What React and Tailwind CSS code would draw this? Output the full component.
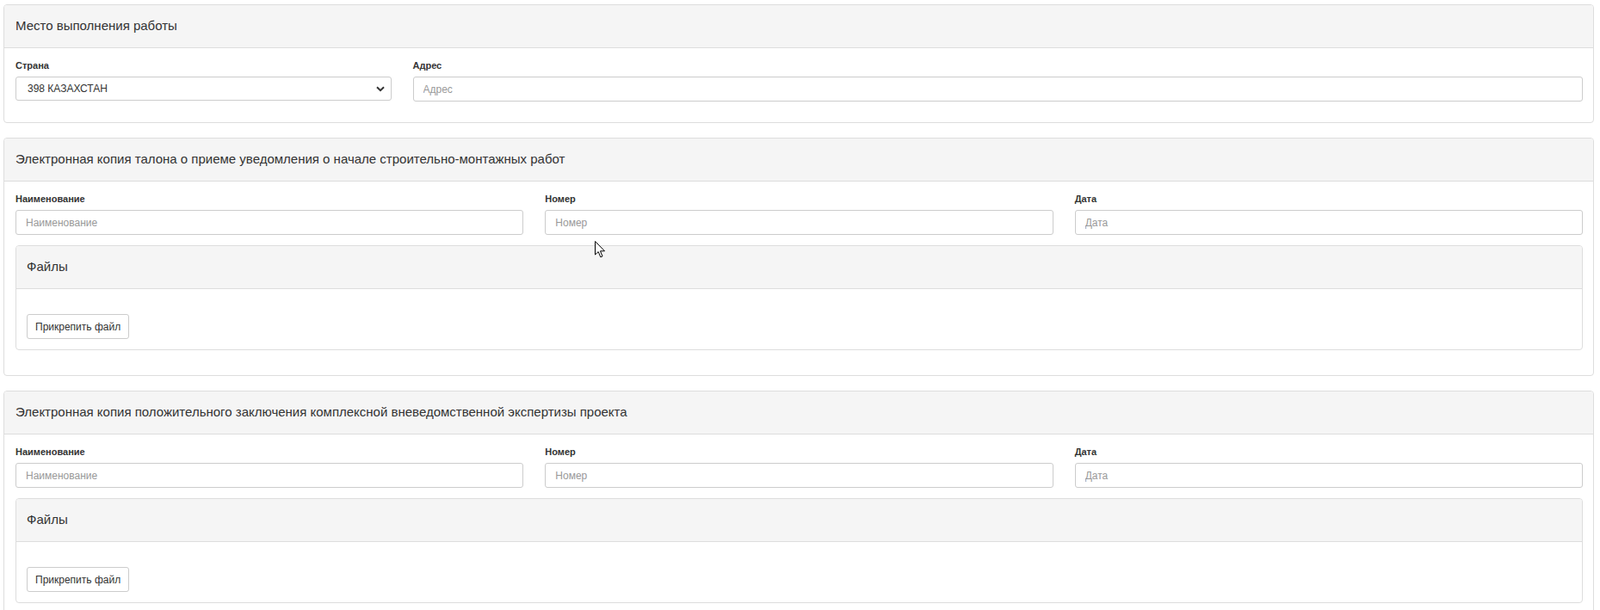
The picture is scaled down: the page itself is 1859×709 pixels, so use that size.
import React from "react";

const font = { fontFamily: '"Liberation Sans", Arial, sans-serif' };

function Chevron() {
  return (
    <svg width="10" height="7" viewBox="0 0 10 7" className="pointer-events-none absolute right-[8px] top-[11px]">
      <path d="M1 1.2 L5 5.2 L9 1.2" fill="none" stroke="#333" strokeWidth="2" />
    </svg>
  );
}

function Label({ children }) {
  return (
    <div className="text-[11px] font-bold leading-[15px] text-[#333] mb-[5px]">{children}</div>
  );
}

function TextInput({ placeholder }) {
  return (
    <input
      placeholder={placeholder}
      className="block w-full h-[29px] rounded-[3px] border border-[#ccc] bg-white px-[11px] text-[12px] text-[#555] placeholder:text-[#999] outline-none"
      style={font}
    />
  );
}

function PanelHeader({ children, small }) {
  return (
    <div className={`h-[50px] flex items-center bg-[#f5f5f5] border-b border-[#ddd] rounded-t-[3px] ${small ? "pl-[12px]" : "pl-[13px]"} text-[15px] text-[#333]`}>
      {children}
    </div>
  );
}

function FilesPanel() {
  return (
    <div className="mt-[12px] border border-[#ddd] rounded-[4px] bg-white">
      <PanelHeader small>Файлы</PanelHeader>
      <div className="pl-[12px] pt-[29px] pb-[12px]">
        <button
          className="h-[29px] px-[9px] rounded-[3px] border border-[#ccc] bg-white text-[12px] text-[#333]"
          style={font}
        >
          Прикрепить файл
        </button>
      </div>
    </div>
  );
}

function DocPanel({ title }) {
  return (
    <div className="mb-[17px] border border-[#ddd] rounded-[4px] bg-white">
      <PanelHeader>{title}</PanelHeader>
      <div className="pl-[13px] pr-[12px] pt-[13px] pb-[29px]">
        <div className="grid grid-cols-3 gap-x-[25px]">
          <div>
            <Label>Наименование</Label>
            <TextInput placeholder="Наименование" />
          </div>
          <div>
            <Label>Номер</Label>
            <TextInput placeholder="Номер" />
          </div>
          <div>
            <Label>Дата</Label>
            <TextInput placeholder="Дата" />
          </div>
        </div>
        <FilesPanel />
      </div>
    </div>
  );
}

export default function App() {
  return (
    <div className="relative w-[1859px] h-[709px] overflow-hidden bg-white pl-[4px] pr-[7px] pt-[5px]" style={font}>
      <div className="mb-[17px] border border-[#ddd] rounded-[4px] bg-white">
        <PanelHeader>Место выполнения работы</PanelHeader>
        <div className="pl-[13px] pr-[12px] pt-[13px] pb-[24px]">
          <div className="grid grid-cols-4 gap-x-[25px]">
            <div>
              <Label>Страна</Label>
              <div className="relative">
                <select
                  className="block w-full h-[28px] appearance-none rounded-[3px] border border-[#ccc] bg-white pl-[13px] text-[12px] text-[#333] outline-none"
                  style={font}
                  defaultValue="398"
                >
                  <option value="398">398 КАЗАХСТАН</option>
                </select>
                <Chevron />
              </div>
            </div>
            <div className="col-span-3">
              <Label>Адрес</Label>
              <TextInput placeholder="Адрес" />
            </div>
          </div>
        </div>
      </div>

      <DocPanel title="Электронная копия талона о приеме уведомления о начале строительно-монтажных работ" />
      <DocPanel title="Электронная копия положительного заключения комплексной вневедомственной экспертизы проекта" />

      <svg width="13" height="20" viewBox="0 0 13 20" className="absolute left-[691px] top-[280px]">
        <path d="M0.5 0.5 L0.5 16 L4.2 12.6 L6.8 18.8 L9 17.9 L6.5 11.8 L11.5 11.8 Z" fill="#fff" stroke="#000" strokeWidth="1" strokeLinejoin="round" />
      </svg>
    </div>
  );
}
